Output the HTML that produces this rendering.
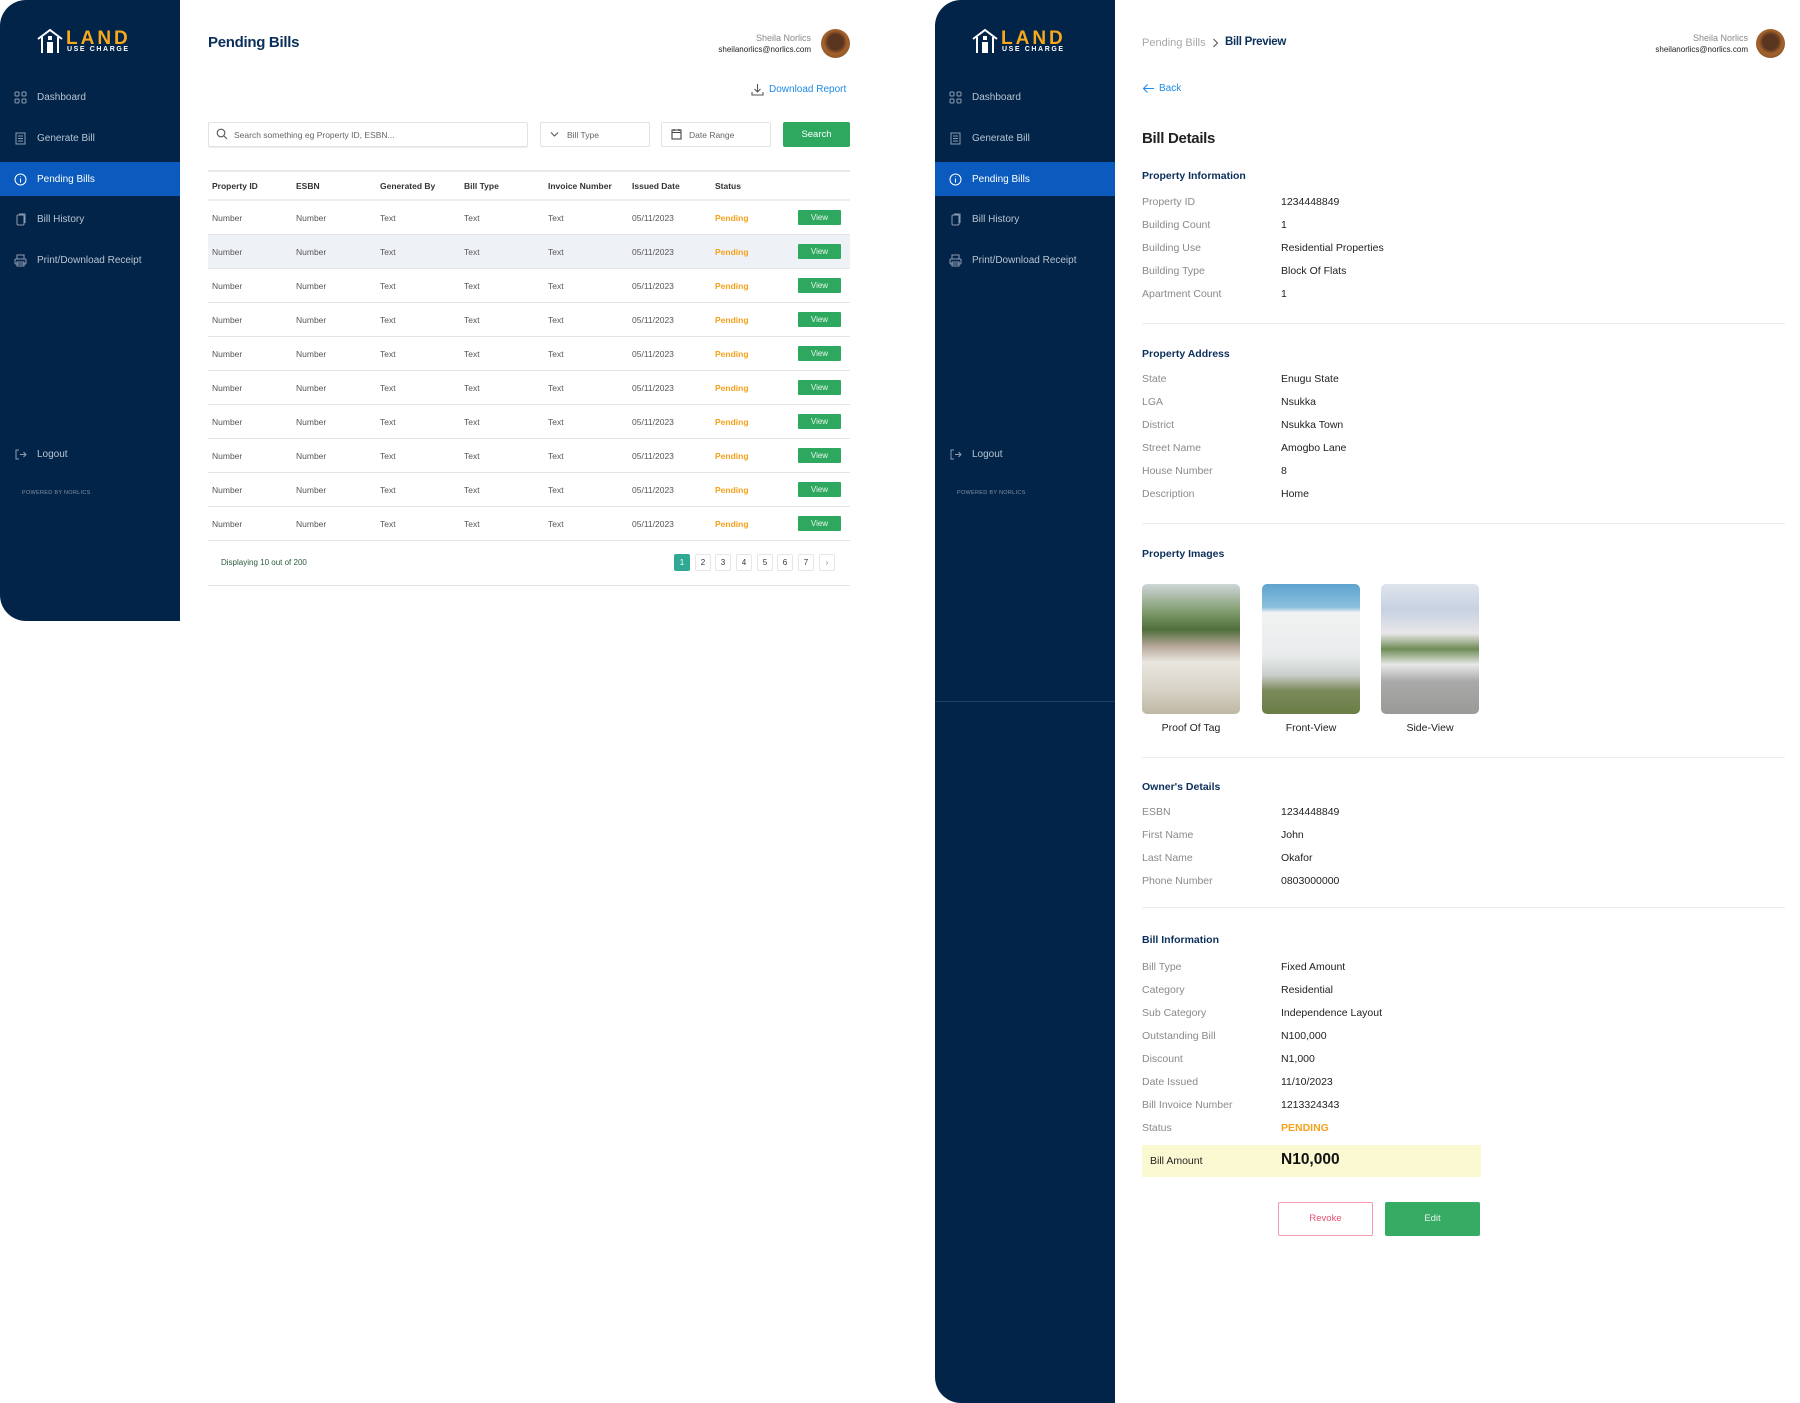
<!DOCTYPE html>
<html><head><meta charset="utf-8">
<style>
*{margin:0;padding:0;box-sizing:border-box}
body{width:1800px;height:1403px;background:#fff;position:relative;overflow:hidden;font-family:"Liberation Sans",Arial,sans-serif;color:#222}
.a{position:absolute;white-space:nowrap}
.sb{position:absolute;top:0;width:180px;background:#012448;border-radius:26px 0 0 26px}
.nav{position:absolute;left:0;width:180px;height:34px;font-size:10px;color:#b9c4d3;display:flex;align-items:center;padding-left:14px;white-space:nowrap}
.nav svg{width:13px;height:13px;margin-right:10px;stroke:#8f9db0;fill:none;stroke-width:1}
.nav.on{background:#0a5bbd;color:#fff}
.nav.on svg{stroke:#fff}
.logo{white-space:nowrap}
.logo .l{position:absolute;left:66px;top:28px;font-size:19px;letter-spacing:3px;color:#f7a81b;font-weight:bold}
.logo .u{position:absolute;left:67px;top:46px;font-size:7px;letter-spacing:1.6px;color:#fff;font-weight:bold;white-space:nowrap}
.th{font-size:8.5px;font-weight:bold;color:#333}
.td{font-size:8.5px;color:#555}
.pen{font-size:8.5px;color:#f5a11c;font-weight:bold}
.view{position:absolute;width:43px;height:15px;background:#2fa85f;color:#e8f5ec;font-size:8px;text-align:center;line-height:15px;border-radius:1px}
.hl{position:absolute;left:208px;width:642px;height:1px;background:#e4e4e4}
.pg{position:absolute;top:554px;width:16px;height:17px;border:1px solid #e6e6e6;font-size:8px;text-align:center;line-height:15px;color:#333;border-radius:2px}
.lb{position:absolute;left:1142px;font-size:10.5px;color:#8a8a8a;white-space:nowrap}
.vl{position:absolute;left:1281px;font-size:10.5px;color:#222;white-space:nowrap}
.sh{position:absolute;left:1142px;font-size:10.5px;font-weight:bold;color:#0b2f5b}
.sep{position:absolute;left:1142px;width:643px;height:1px;background:#ececec}
.img{position:absolute;top:584px;width:98px;height:130px;border-radius:5px;overflow:hidden}
.cap{position:absolute;top:722px;width:98px;text-align:center;font-size:10.5px;color:#222}
</style></head><body>

<!-- LEFT SIDEBAR -->
<div class="sb" style="left:0;height:621px"></div>
<div class="logo" style="position:absolute;left:0;top:0;width:180px">
<svg class="a" style="left:36px;top:28px" width="28" height="26" viewBox="0 0 28 26"><path d="M2 11 L14 2 L26 11" stroke="#fff" stroke-width="2" fill="none"/><path d="M6 9 V25 M22 9 V25" stroke="#fff" stroke-width="2"/><rect x="11" y="14" width="6" height="11" fill="#fff"/><rect x="12" y="8" width="4" height="4" fill="#fff"/></svg>
<div class="l">LAND</div><div class="u">USE CHARGE</div>
<div class="nav" style="top:80px"><svg viewBox="0 0 13 13"><rect x="1" y="1" width="4" height="4" rx="1"/><rect x="8" y="1" width="4" height="4" rx="1"/><rect x="1" y="8" width="4" height="4" rx="1"/><rect x="8" y="8" width="4" height="4" rx="1"/></svg>Dashboard</div>
<div class="nav" style="top:121px"><svg viewBox="0 0 13 13"><rect x="2" y="1" width="9" height="11"/><path d="M4 4h5M4 6.5h5M4 9h5"/></svg>Generate Bill</div>
<div class="nav on" style="top:162px"><svg viewBox="0 0 13 13"><circle cx="6.5" cy="6.5" r="5.5"/><path d="M6.5 5.5v4M6.5 3.5v.5"/></svg>Pending Bills</div>
<div class="nav" style="top:202px"><svg viewBox="0 0 13 13"><rect x="3" y="2" width="7" height="10" rx="1"/><path d="M5 1h6v9"/></svg>Bill History</div>
<div class="nav" style="top:243px"><svg viewBox="0 0 13 13"><rect x="3" y="1" width="7" height="4"/><rect x="1" y="5" width="11" height="5" rx="1"/><rect x="3" y="8" width="7" height="4"/></svg>Print/Download Receipt</div>
<div class="nav" style="top:437px"><svg viewBox="0 0 13 13"><path d="M5 2H2v9h3M6 6.5h6M9.5 4l2.5 2.5L9.5 9"/></svg>Logout</div>
<div class="a" style="left:22px;top:490px;font-size:5.5px;color:#8391a5;letter-spacing:.3px">POWERED BY NORLICS</div>
</div>

<!-- LEFT CONTENT -->
<div class="a" style="left:208px;top:34px;font-size:15px;font-weight:bold;color:#0b2f5b;letter-spacing:-.3px">Pending Bills</div>
<div class="a" style="right:989px;top:33px;font-size:9px;color:#888;text-align:right">Sheila Norlics</div>
<div class="a" style="right:989px;top:45px;font-size:8px;color:#222;text-align:right">sheilanorlics@norlics.com</div>
<div class="a" style="left:821px;top:29px;width:29px;height:29px;border-radius:50%;background:radial-gradient(circle at 50% 45%,#5a3520 0 35%,#a5622c 55%,#6b4b25 100%)"></div>
<svg class="a" style="left:751px;top:83px" width="13" height="13" viewBox="0 0 13 13" fill="none" stroke="#555" stroke-width="1.1"><path d="M6.5 1v8M3.5 6l3 3 3-3M1 9v3h11V9"/></svg>
<div class="a" style="left:769px;top:84px;font-size:10px;color:#1f8ae8">Download Report</div>
<div class="a" style="left:208px;top:122px;width:320px;height:25px;border:1px solid #e2e2e2;border-radius:2px;box-shadow:0 1px 1px #eee"></div>
<svg class="a" style="left:216px;top:128px" width="12" height="12" viewBox="0 0 12 12" fill="none" stroke="#555" stroke-width="1.1"><circle cx="5" cy="5" r="3.8"/><path d="M8 8l3 3"/></svg>
<div class="a" style="left:234px;top:130px;font-size:8.5px;color:#666">Search something eg Property ID, ESBN...</div>
<div class="a" style="left:540px;top:122px;width:110px;height:25px;border:1px solid #e2e2e2;border-radius:2px"></div>
<svg class="a" style="left:550px;top:131px" width="9" height="7" viewBox="0 0 9 7" fill="none" stroke="#555" stroke-width="1.1"><path d="M1 1.5l3.5 3.5L8 1.5"/></svg>
<div class="a" style="left:567px;top:130px;font-size:8.5px;color:#666">Bill Type</div>
<div class="a" style="left:661px;top:122px;width:110px;height:25px;border:1px solid #e2e2e2;border-radius:2px"></div>
<svg class="a" style="left:671px;top:128px" width="11" height="12" viewBox="0 0 11 12" fill="none" stroke="#444" stroke-width="1.1"><rect x="1" y="2" width="9" height="9"/><path d="M1 4.5h9M3 1v2M8 1v2"/></svg>
<div class="a" style="left:689px;top:130px;font-size:8.5px;color:#666">Date Range</div>
<div class="a" style="left:783px;top:122px;width:67px;height:25px;background:#2fa85f;border-radius:2px;color:#fff;font-size:9.5px;text-align:center;line-height:25px">Search</div>

<div class="hl" style="top:170px;height:2px;background:#e8e8e8"></div>
<div class="a th" style="left:212px;top:181px">Property ID</div>
<div class="a th" style="left:296px;top:181px">ESBN</div>
<div class="a th" style="left:380px;top:181px">Generated By</div>
<div class="a th" style="left:464px;top:181px">Bill Type</div>
<div class="a th" style="left:548px;top:181px">Invoice Number</div>
<div class="a th" style="left:632px;top:181px">Issued Date</div>
<div class="a th" style="left:715px;top:181px">Status</div>
<div class="hl" style="top:199px;height:2px;background:#eee"></div>

<div id="rows"></div>
<script>
var h='';for(var i=0;i<10;i++){var t=201+i*34;
if(i==1)h+='<div class="a" style="left:208px;top:'+t+'px;width:642px;height:33px;background:#eef2f6"></div>';
var y=t+12;
h+='<div class="a td" style="left:212px;top:'+y+'px">Number</div><div class="a td" style="left:296px;top:'+y+'px">Number</div><div class="a td" style="left:380px;top:'+y+'px">Text</div><div class="a td" style="left:464px;top:'+y+'px">Text</div><div class="a td" style="left:548px;top:'+y+'px">Text</div><div class="a td" style="left:632px;top:'+y+'px">05/11/2023</div><div class="a pen" style="left:715px;top:'+y+'px">Pending</div><div class="view" style="left:798px;top:'+(t+9)+'px">View</div><div class="hl" style="top:'+(t+33)+'px"></div>';}
document.getElementById('rows').innerHTML=h;
</script>
<div class="a" style="left:221px;top:558px;font-size:8px;color:#2b5a3b">Displaying 10 out of 200</div>
<div class="pg" style="left:674px;background:#30a994;border-color:#30a994;color:#fff">1</div>
<div class="pg" style="left:695px">2</div>
<div class="pg" style="left:715px">3</div>
<div class="pg" style="left:736px">4</div>
<div class="pg" style="left:757px">5</div>
<div class="pg" style="left:777px">6</div>
<div class="pg" style="left:798px">7</div>
<div class="pg" style="left:819px;color:#888">&#8250;</div>
<div class="hl" style="top:585px"></div>

<!-- RIGHT SIDEBAR -->
<div class="sb" style="left:935px;height:1403px;border-radius:26px 0 0 26px"></div>
<div class="a" style="left:935px;top:701px;width:180px;height:1px;background:#1d3d63"></div>
<div class="logo" style="position:absolute;left:935px;top:0;width:180px">
<svg class="a" style="left:36px;top:28px" width="28" height="26" viewBox="0 0 28 26"><path d="M2 11 L14 2 L26 11" stroke="#fff" stroke-width="2" fill="none"/><path d="M6 9 V25 M22 9 V25" stroke="#fff" stroke-width="2"/><rect x="11" y="14" width="6" height="11" fill="#fff"/><rect x="12" y="8" width="4" height="4" fill="#fff"/></svg>
<div class="l">LAND</div><div class="u">USE CHARGE</div>
<div class="nav" style="top:80px"><svg viewBox="0 0 13 13"><rect x="1" y="1" width="4" height="4" rx="1"/><rect x="8" y="1" width="4" height="4" rx="1"/><rect x="1" y="8" width="4" height="4" rx="1"/><rect x="8" y="8" width="4" height="4" rx="1"/></svg>Dashboard</div>
<div class="nav" style="top:121px"><svg viewBox="0 0 13 13"><rect x="2" y="1" width="9" height="11"/><path d="M4 4h5M4 6.5h5M4 9h5"/></svg>Generate Bill</div>
<div class="nav on" style="top:162px"><svg viewBox="0 0 13 13"><circle cx="6.5" cy="6.5" r="5.5"/><path d="M6.5 5.5v4M6.5 3.5v.5"/></svg>Pending Bills</div>
<div class="nav" style="top:202px"><svg viewBox="0 0 13 13"><rect x="3" y="2" width="7" height="10" rx="1"/><path d="M5 1h6v9"/></svg>Bill History</div>
<div class="nav" style="top:243px"><svg viewBox="0 0 13 13"><rect x="3" y="1" width="7" height="4"/><rect x="1" y="5" width="11" height="5" rx="1"/><rect x="3" y="8" width="7" height="4"/></svg>Print/Download Receipt</div>
<div class="nav" style="top:437px"><svg viewBox="0 0 13 13"><path d="M5 2H2v9h3M6 6.5h6M9.5 4l2.5 2.5L9.5 9"/></svg>Logout</div>
<div class="a" style="left:22px;top:490px;font-size:5.5px;color:#8391a5;letter-spacing:.3px">POWERED BY NORLICS</div>
</div>

<!-- RIGHT CONTENT -->
<div class="a" style="left:1142px;top:37px;font-size:11px;color:#a8a8a8">Pending Bills</div>
<svg class="a" style="left:1212px;top:38px" width="7" height="10" viewBox="0 0 7 10" fill="none" stroke="#555" stroke-width="1.1"><path d="M1.5 1l4 4-4 4"/></svg>
<div class="a" style="left:1225px;top:36px;font-size:11.5px;color:#0b2f5b;font-weight:bold;letter-spacing:-.3px">Bill Preview</div>
<div class="a" style="right:52px;top:33px;font-size:9px;color:#888">Sheila Norlics</div>
<div class="a" style="right:52px;top:45px;font-size:8px;color:#222">sheilanorlics@norlics.com</div>
<div class="a" style="left:1756px;top:29px;width:29px;height:29px;border-radius:50%;background:radial-gradient(circle at 50% 45%,#5a3520 0 35%,#a5622c 55%,#6b4b25 100%)"></div>
<svg class="a" style="left:1142px;top:83px" width="13" height="11" viewBox="0 0 13 11" fill="none" stroke="#1f8ae8" stroke-width="1.1"><path d="M12 5.5H1.5M5.5 1.5l-4 4 4 4"/></svg>
<div class="a" style="left:1159px;top:83px;font-size:10px;color:#1f8ae8">Back</div>
<div class="a" style="left:1142px;top:130px;font-size:15px;font-weight:bold;color:#222;letter-spacing:-.3px">Bill Details</div>

<div class="sh" style="top:170px">Property Information</div>
<div class="lb" style="top:196px">Property ID</div><div class="vl" style="top:196px">1234448849</div>
<div class="lb" style="top:219px">Building Count</div><div class="vl" style="top:219px">1</div>
<div class="lb" style="top:242px">Building Use</div><div class="vl" style="top:242px">Residential Properties</div>
<div class="lb" style="top:265px">Building Type</div><div class="vl" style="top:265px">Block Of Flats</div>
<div class="lb" style="top:288px">Apartment Count</div><div class="vl" style="top:288px">1</div>
<div class="sep" style="top:323px"></div>

<div class="sh" style="top:348px">Property Address</div>
<div class="lb" style="top:373px">State</div><div class="vl" style="top:373px">Enugu State</div>
<div class="lb" style="top:396px">LGA</div><div class="vl" style="top:396px">Nsukka</div>
<div class="lb" style="top:419px">District</div><div class="vl" style="top:419px">Nsukka Town</div>
<div class="lb" style="top:442px">Street Name</div><div class="vl" style="top:442px">Amogbo Lane</div>
<div class="lb" style="top:465px">House Number</div><div class="vl" style="top:465px">8</div>
<div class="lb" style="top:488px">Description</div><div class="vl" style="top:488px">Home</div>
<div class="sep" style="top:523px"></div>

<div class="sh" style="top:548px">Property Images</div>
<div class="img" style="left:1142px;background:linear-gradient(180deg,#cfd6d8 0%,#7d9a6a 22%,#4f6e3b 35%,#b7a79a 48%,#e9e6df 60%,#d9d4c8 80%,#bfb7a4 100%)"></div>
<div class="img" style="left:1262px;background:linear-gradient(180deg,#5ea3cf 0%,#8cc0dd 18%,#f1f3f3 22%,#e9ecec 55%,#c9cfcc 70%,#7c8a5b 82%,#6a7e45 100%)"></div>
<div class="img" style="left:1381px;background:linear-gradient(180deg,#dfe4ec 0%,#c7d2e2 20%,#e8e6e8 38%,#6f8c55 50%,#e6e8e6 62%,#a9a9a9 75%,#9a9a97 100%)"></div>
<div class="cap" style="left:1142px">Proof Of Tag</div>
<div class="cap" style="left:1262px">Front-View</div>
<div class="cap" style="left:1381px">Side-View</div>
<div class="sep" style="top:757px"></div>

<div class="sh" style="top:781px">Owner's Details</div>
<div class="lb" style="top:806px">ESBN</div><div class="vl" style="top:806px">1234448849</div>
<div class="lb" style="top:829px">First Name</div><div class="vl" style="top:829px">John</div>
<div class="lb" style="top:852px">Last Name</div><div class="vl" style="top:852px">Okafor</div>
<div class="lb" style="top:875px">Phone Number</div><div class="vl" style="top:875px">0803000000</div>
<div class="sep" style="top:907px"></div>

<div class="sh" style="top:934px">Bill Information</div>
<div class="lb" style="top:961px">Bill Type</div><div class="vl" style="top:961px">Fixed Amount</div>
<div class="lb" style="top:984px">Category</div><div class="vl" style="top:984px">Residential</div>
<div class="lb" style="top:1007px">Sub Category</div><div class="vl" style="top:1007px">Independence Layout</div>
<div class="lb" style="top:1030px">Outstanding Bill</div><div class="vl" style="top:1030px">N100,000</div>
<div class="lb" style="top:1053px">Discount</div><div class="vl" style="top:1053px">N1,000</div>
<div class="lb" style="top:1076px">Date Issued</div><div class="vl" style="top:1076px">11/10/2023</div>
<div class="lb" style="top:1099px">Bill Invoice Number</div><div class="vl" style="top:1099px">1213324343</div>
<div class="lb" style="top:1122px">Status</div><div class="vl" style="top:1122px;color:#f5a11c;font-weight:bold">PENDING</div>

<div class="a" style="left:1142px;top:1145px;width:339px;height:32px;background:#fbf9d2"></div>
<div class="a" style="left:1150px;top:1155px;font-size:10.5px;color:#222">Bill Amount</div>
<div class="a" style="left:1281px;top:1151px;font-size:15.5px;color:#111;font-weight:bold">N10,000</div>
<div class="a" style="left:1278px;top:1202px;width:95px;height:34px;border:1px solid #f59aae;border-radius:2px;color:#e9506f;font-size:9.5px;text-align:center;line-height:32px">Revoke</div>
<div class="a" style="left:1385px;top:1202px;width:95px;height:34px;background:#35ab64;border-radius:2px;color:#e8f5ec;font-size:9.5px;text-align:center;line-height:34px">Edit</div>
</body></html>
